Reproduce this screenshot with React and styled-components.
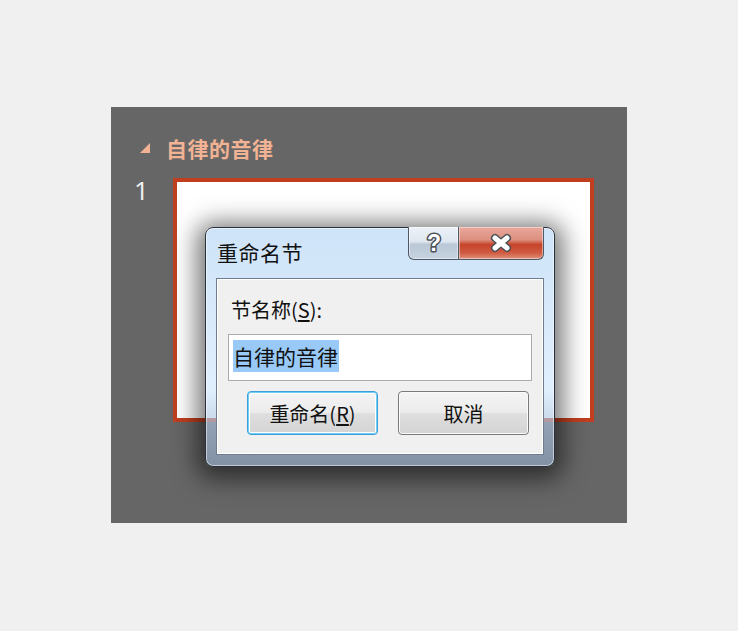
import React from "react";
import styled, { createGlobalStyle } from "styled-components";

const GlobalStyle = createGlobalStyle`
  html, body {
    margin: 0;
    padding: 0;
    background: #f0f0f0;
  }
  body {
    font-family: "Noto Sans CJK SC", "Noto Sans", sans-serif;
  }
`;

const Page = styled.div`
  width: 738px;
  height: 631px;
  display: flex;
  align-items: center;
  justify-content: center;
`;

const Panel = styled.div`
  position: relative;
  width: 516px;
  height: 416px;
  margin-top: -1px;
  background: #666666;
  display: flex;
  flex-direction: column;
  padding: 27px 0 0 26px;
  box-sizing: border-box;
`;

const SectionHeader = styled.div`
  display: flex;
  align-items: center;
  height: 28px;
  padding-left: 3px;
  gap: 15px;
`;

const SectionTitle = styled.span`
  font-size: 21px;
  font-weight: 700;
  line-height: 28px;
  color: #f2b394;
  letter-spacing: 0.5px;
`;

const SlideRow = styled.div`
  display: flex;
  margin-top: 16px;
`;

const SlideNumber = styled.span`
  width: 36px;
  font-family: "Open Sans", "Noto Sans", sans-serif;
  font-size: 26px;
  font-weight: 500;
  line-height: 24px;
  color: #f2f2f2;
  margin-left: -3px;
  padding-right: 3px;
`;

const Slide = styled.div`
  width: 421px;
  height: 244px;
  box-sizing: border-box;
  border: 4px solid #c13f1f;
  background: #ffffff;
`;

const Dialog = styled.div`
  position: absolute;
  left: 94px;
  top: 120px;
  width: 350px;
  height: 240px;
  box-sizing: border-box;
  border: 1px solid #2a313b;
  border-radius: 8px;
  background: linear-gradient(
    to bottom,
    rgba(196, 222, 247, 0.84) 0%,
    rgba(208, 229, 250, 0.8) 40%,
    rgba(214, 234, 252, 0.74) 68%,
    rgba(170, 195, 222, 0.66) 82%,
    rgba(150, 175, 205, 0.6) 100%
  );
  box-shadow: 0 4px 24px 8px rgba(0, 0, 0, 0.55),
    inset 0 0 0 1px rgba(255, 255, 255, 0.5);
  display: flex;
  flex-direction: column;
`;

const TitleBar = styled.div`
  height: 50px;
  display: flex;
  justify-content: space-between;
  align-items: flex-start;
  padding: 0 10px 0 11px;
`;

const TitleText = styled.span`
  margin-top: 9px;
  font-size: 21px;
  line-height: 30px;
  color: #111;
  letter-spacing: 0.5px;
`;

const CaptionGroup = styled.div`
  display: flex;
  height: 33px;
  margin-top: -1px;
`;

const CaptionButton = styled.div`
  display: flex;
  align-items: center;
  justify-content: center;
  box-sizing: border-box;
  width: ${(p) => p.$w}px;
  height: 100%;
  border: 1px solid #4e5a68;
  border-top: none;
  background: ${(p) =>
    p.$close
      ? "linear-gradient(to bottom, #e9a89b 0%, #dc8f7f 40%, #c6432a 55%, #cf5a40 80%, #e08f7c 100%)"
      : "linear-gradient(to bottom, #edf2f8 0%, #dfe7f0 45%, #b9c7d6 55%, #c7d3e0 100%)"};
  border-radius: ${(p) => (p.$close ? "0 0 6px 0" : "0 0 0 6px")};
  ${(p) => (p.$close ? "border-left: none;" : "")}
  box-shadow: inset 0 0 0 1px rgba(255, 255, 255, 0.45);
`;

const ClientArea = styled.div`
  flex: 1;
  margin: 0 10px 11px 10px;
  border: 1px solid #6f7c8c;
  box-shadow: inset 0 0 0 1px #ffffff;
  background: #f0f0f0;
  padding: 19px 10px 0 11px;
  display: flex;
  flex-direction: column;
`;

const FieldLabel = styled.label`
  font-size: 20px;
  line-height: 24px;
  color: #111;
  margin-left: 3px;
  u {
    text-underline-offset: 2px;
  }
`;

const TextBox = styled.div`
  margin-top: 12px;
  width: 304px;
  height: 47px;
  box-sizing: border-box;
  border: 1px solid #a9abb0;
  background: #ffffff;
  padding: 5px 4px 0;
`;

const Selected = styled.span`
  display: inline-block;
  background: #99c9f7;
  font-size: 21px;
  line-height: 32px;
  color: #111;
  padding-right: 1px;
`;

const ButtonRow = styled.div`
  display: flex;
  gap: 20px;
  margin-top: 10px;
  padding-left: 19px;
`;

const DialogButton = styled.button`
  width: 131px;
  height: 44px;
  box-sizing: border-box;
  border-radius: 4px;
  font-family: "Noto Sans CJK SC", "Noto Sans", sans-serif;
  font-size: 20px;
  color: #111;
  padding: 0;
  border: 1px solid ${(p) => (p.$focused ? "#3c9fd9" : "#7a7a7a")};
  background: linear-gradient(
    to bottom,
    #f4f4f4 0%,
    #ececec 48%,
    #dedede 52%,
    #d4d4d4 100%
  );
  box-shadow: ${(p) =>
    p.$focused
      ? "inset 0 0 0 1px #72cdf4, inset 0 0 0 2px #ffffff"
      : "inset 0 0 0 1px #fbfbfb"};
  u {
    text-underline-offset: 2px;
  }
`;

const CollapseMark = () => (
  <svg width="11" height="10" viewBox="0 0 11 10">
    <polygon points="10,0 10,10 0,10" fill="#f0b293" />
  </svg>
);

const HelpMark = () => (
  <svg width="22" height="24" viewBox="0 0 22 24">
    <text
      x="11"
      y="20"
      textAnchor="middle"
      fontFamily="Liberation Sans, Arial, sans-serif"
      fontWeight="700"
      fontSize="23"
      fill="#ffffff"
      stroke="#4a4f57"
      strokeWidth="3"
      strokeLinejoin="round"
      paintOrder="stroke"
    >
      ?
    </text>
  </svg>
);

const CloseMark = () => (
  <svg width="28" height="20" viewBox="0 0 28 20">
    <path
      d="M8 5 L20 15 M20 5 L8 15"
      stroke="#4a4f57"
      strokeWidth="8"
      strokeLinecap="round"
    />
    <path
      d="M8 5 L20 15 M20 5 L8 15"
      stroke="#ffffff"
      strokeWidth="5"
      strokeLinecap="round"
    />
  </svg>
);

export default function App() {
  return (
    <>
      <GlobalStyle />
      <Page>
        <Panel>
          <SectionHeader>
            <CollapseMark />
            <SectionTitle>自律的音律</SectionTitle>
          </SectionHeader>
          <SlideRow>
            <SlideNumber>1</SlideNumber>
            <Slide />
          </SlideRow>

          <Dialog>
            <TitleBar>
              <TitleText>重命名节</TitleText>
              <CaptionGroup>
                <CaptionButton $w={51}>
                  <HelpMark />
                </CaptionButton>
                <CaptionButton $w={85} $close>
                  <CloseMark />
                </CaptionButton>
              </CaptionGroup>
            </TitleBar>
            <ClientArea>
              <FieldLabel>
                节名称(<u>S</u>):
              </FieldLabel>
              <TextBox>
                <Selected>自律的音律</Selected>
              </TextBox>
              <ButtonRow>
                <DialogButton $focused>
                  重命名(<u>R</u>)
                </DialogButton>
                <DialogButton>取消</DialogButton>
              </ButtonRow>
            </ClientArea>
          </Dialog>
        </Panel>
      </Page>
    </>
  );
}
